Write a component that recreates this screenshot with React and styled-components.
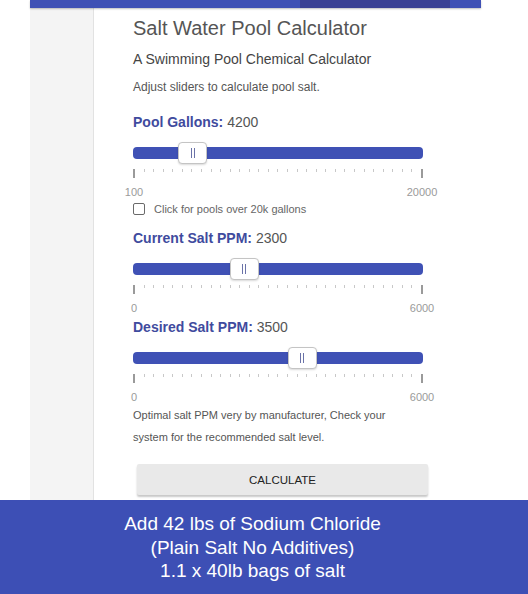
import React from "react";
import styled, { createGlobalStyle } from "styled-components";

const Global = createGlobalStyle`
  html, body { margin: 0; padding: 0; background: #ffffff; }
  body { font-family: "Liberation Sans", Arial, sans-serif; }
  * { box-sizing: border-box; }
`;

const Page = styled.div`
  width: 528px;
  height: 594px;
  display: flex;
  flex-direction: column;
  overflow: hidden;
`;

const Frame = styled.div`
  margin-left: 30px;
  width: 451px;
  height: 500px;
  display: flex;
  flex-direction: column;
`;

const TopBar = styled.div`
  height: 8px;
  display: flex;
  box-shadow: 0 1px 2px rgba(0, 0, 0, 0.25);
  position: relative;
  z-index: 1;
`;

const BarSeg = styled.div`
  flex: ${(p) => p.$w} 0 0;
  background: ${(p) => (p.$dark ? "#3a4194" : "#3f51b5")};
`;

const Body = styled.div`
  flex: 1;
  display: flex;
`;

const Sidebar = styled.div`
  width: 64px;
  background: #f4f4f4;
  border-right: 1px solid #e2e2e2;
`;

const Content = styled.div`
  flex: 1;
  padding: 8px 0 0 39px;
  display: flex;
  flex-direction: column;
`;

const Title = styled.h1`
  margin: 0;
  font-size: 20px;
  line-height: 24px;
  font-weight: normal;
  color: #555;
`;

const Subtitle = styled.h2`
  margin: 9px 0 0;
  font-size: 14px;
  line-height: 20px;
  font-weight: normal;
  color: #444;
`;

const Intro = styled.p`
  margin: 10px 0 0;
  font-size: 12px;
  line-height: 16px;
  color: #555;
`;

const Group = styled.div`
  margin-top: ${(p) => p.$mt}px;
  width: 290px;
  display: flex;
  flex-direction: column;
`;

const Label = styled.div`
  font-size: 14px;
  line-height: 20px;
  color: #555;
  b { color: #3f4b9e; font-weight: bold; }
`;

const SliderBox = styled.div`
  margin-top: 10px;
  height: 22px;
  position: relative;
  display: flex;
  align-items: center;
`;

const Track = styled.div`
  width: 100%;
  height: 12px;
  border-radius: 4px;
  background: #3f51b5;
`;

const Thumb = styled.div`
  position: absolute;
  top: 0;
  width: 29px;
  height: 22px;
  margin-left: -14.5px;
  background: #fff;
  border: 1px solid #c4c4c4;
  border-radius: 4px;
  box-shadow: 0 1px 2px rgba(0, 0, 0, 0.15);
  display: flex;
  align-items: center;
  justify-content: center;
  gap: 2px;
`;

const Grip = styled.span`
  width: 1px;
  height: 10px;
  background: #6a72a8;
`;

const Ticks = styled.div`
  margin-top: 5px;
  height: 9px;
  display: flex;
  justify-content: space-between;
  align-items: flex-start;
`;

const Tick = styled.span`
  width: ${(p) => (p.$major ? 2 : 1)}px;
  height: ${(p) => (p.$major ? 9 : 3)}px;
  background: ${(p) => (p.$major ? "#9a9a9a" : "#c8c8c8")};
`;

const Scale = styled.div`
  margin-top: 8px;
  display: flex;
  justify-content: space-between;
  font-size: 11px;
  line-height: 13px;
  color: #9a9a9a;
`;

const ScaleEnd = styled.span`
  transform: translateX(${(p) => (p.$right ? "50%" : "-50%")});
  margin: ${(p) => (p.$right ? "0 1px 0 0" : "0 0 0 1px")};
`;

const CheckRow = styled.label`
  margin-top: 4px;
  display: flex;
  align-items: center;
  gap: 9px;
  font-size: 11px;
  line-height: 12px;
  color: #666;
`;

const Box = styled.span`
  width: 12px;
  height: 12px;
  border: 1.5px solid #6a6a6a;
  border-radius: 2px;
  background: #fff;
`;

const Note = styled.p`
  margin: 0;
  width: 270px;
  font-size: 11px;
  line-height: 22px;
  color: #555;
`;

const Button = styled.button`
  margin: 16px 0 0 4px;
  width: 291px;
  height: 31px;
  border: none;
  border-radius: 2px;
  background: #e9e9e9;
  box-shadow: 0 2px 2px rgba(0, 0, 0, 0.22);
  font-family: "Liberation Sans", Arial, sans-serif;
  font-size: 11.5px;
  color: #222;
  padding: 0;
`;

const Banner = styled.div`
  height: 94px;
  background: #3d4fb5;
  padding: 12px 0 0 30px;
`;

const BannerText = styled.div`
  width: 445px;
  text-align: center;
  color: #fff;
  font-size: 19px;
  line-height: 23.5px;
`;

function Slider({ label, value, min, max, minLabel, maxLabel, mt }) {
  const pct = ((value - min) / (max - min)) * 100;
  const ticks = Array.from({ length: 31 }, (_, i) => i);
  return (
    <Group $mt={mt}>
      <Label>
        <b>{label}:</b> {value}
      </Label>
      <SliderBox>
        <Track />
        <Thumb style={{ left: `${pct}%` }}>
          <Grip />
          <Grip />
        </Thumb>
      </SliderBox>
      <Ticks>
        {ticks.map((i) => (
          <Tick key={i} $major={i === 0 || i === 30} />
        ))}
      </Ticks>
      <Scale>
        <ScaleEnd>{minLabel}</ScaleEnd>
        <ScaleEnd $right>{maxLabel}</ScaleEnd>
      </Scale>
    </Group>
  );
}

export default function App() {
  return (
    <Page>
      <Global />
      <Frame>
        <TopBar>
          <BarSeg $w={270} />
          <BarSeg $w={150} $dark />
          <BarSeg $w={31} />
        </TopBar>
        <Body>
          <Sidebar />
          <Content>
            <Title>Salt Water Pool Calculator</Title>
            <Subtitle>A Swimming Pool Chemical Calculator</Subtitle>
            <Intro>Adjust sliders to calculate pool salt.</Intro>
            <Slider label="Pool Gallons" value={4200} min={100} max={20000} minLabel="100" maxLabel="20000" mt={17} />
            <CheckRow>
              <Box />
              Click for pools over 20k gallons
            </CheckRow>
            <Slider label="Current Salt PPM" value={2300} min={0} max={6000} minLabel="0" maxLabel="6000" mt={13} />
            <Slider label="Desired Salt PPM" value={3500} min={0} max={6000} minLabel="0" maxLabel="6000" mt={2} />
            <Note>
              Optimal salt PPM very by manufacturer, Check your system for the recommended salt level.
            </Note>
            <Button>CALCULATE</Button>
          </Content>
        </Body>
      </Frame>
      <Banner>
        <BannerText>
          Add 42 lbs of Sodium Chloride
          <br />
          (Plain Salt No Additives)
          <br />
          1.1 x 40lb bags of salt
        </BannerText>
      </Banner>
    </Page>
  );
}
